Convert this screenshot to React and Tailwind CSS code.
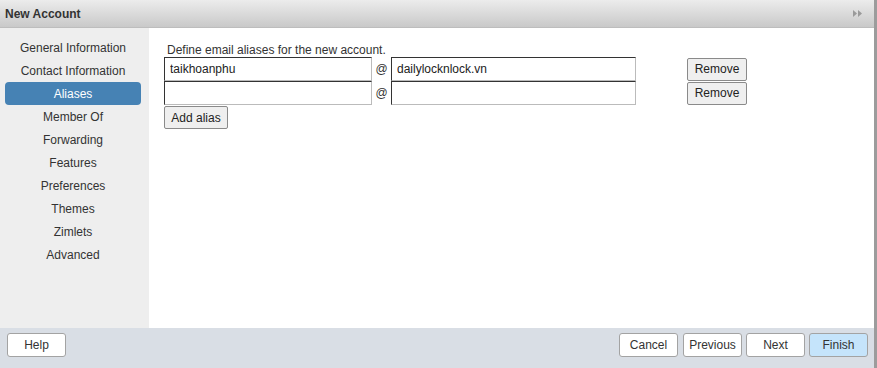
const navItems = [
  "General Information",
  "Contact Information",
  "Aliases",
  "Member Of",
  "Forwarding",
  "Features",
  "Preferences",
  "Themes",
  "Zimlets",
  "Advanced",
];

const aliases = [
  { name: "taikhoanphu", domain: "dailylocknlock.vn" },
  { name: "", domain: "" },
];

const FooterButton = ({ children, className = "" }) => (
  <button
    className={
      "h-[24px] w-[59px] rounded-[3px] border border-[#a3a3a3] text-[12px] text-[#333] " +
      className
    }
  >
    {children}
  </button>
);

const App = () => {
  return (
    <div
      className="flex h-[368px] w-[877px] overflow-hidden bg-white"
      style={{ fontFamily: '"Liberation Sans", Arial, sans-serif' }}
    >
      <div className="flex w-[874px] flex-col">
        {/* title bar */}
        <div className="flex h-[28px] items-center justify-between border-b border-[#bdbdbd] bg-gradient-to-b from-[#ececec] to-[#c9c9c9] pl-[5px] pr-[12px]">
          <span className="text-[12px] font-bold text-[#333]">New Account</span>
          <svg width="9" height="7" viewBox="0 0 9 7">
            <path d="M0 0 L4 3.5 L0 7 Z" fill="#9a9a9a" />
            <path d="M5 0 L9 3.5 L5 7 Z" fill="#9a9a9a" />
          </svg>
        </div>

        <div className="flex h-[300px]">
          {/* side nav */}
          <div className="flex w-[149px] flex-col bg-[#eeeeee] pt-[8px]">
            {navItems.map((item) => (
              <div
                key={item}
                className={
                  item === "Aliases"
                    ? "mx-[5px] flex h-[23px] w-[136px] items-center justify-center rounded-[4px] bg-[#4682b4] text-[12px] text-white"
                    : "flex h-[23px] w-[146px] items-center justify-center text-[12px] text-[#333]"
                }
              >
                {item}
              </div>
            ))}
          </div>

          {/* content */}
          <div className="flex-1 pl-[15px] pt-[15px] text-[12px] text-[#333]">
            <p className="pl-[3px] leading-[14px]">Define email aliases for the new account.</p>
            {aliases.map((a, i) => (
              <div key={i} className="flex h-[24px] items-center">
                <input
                  readOnly
                  value={a.name}
                  className="h-[24px] w-[208px] border border-t-[#333] border-l-[#333] border-b-[#bbb] border-r-[#bbb] bg-white px-[5px] text-[12px] text-[#222] outline-none"
                />
                <span className="w-[19px] text-center text-[12px]">@</span>
                <input
                  readOnly
                  value={a.domain}
                  className="h-[24px] w-[245px] border border-t-[#333] border-l-[#333] border-b-[#bbb] border-r-[#bbb] bg-white px-[5px] text-[12px] text-[#222] outline-none"
                />
                <button className="ml-[51px] h-[23px] w-[60px] rounded-[2px] border border-[#8a8a8a] bg-[#efefef] text-[12px] text-[#222]">
                  Remove
                </button>
              </div>
            ))}
            <button className="mt-[1px] h-[23px] w-[64px] rounded-[2px] border border-[#8a8a8a] bg-[#efefef] text-[12px] text-[#222]">
              Add alias
            </button>
          </div>
        </div>

        {/* footer */}
        <div className="flex flex-1 items-start justify-between bg-[#d9dee5] pl-[7px] pr-[6px] pt-[5px]">
          <FooterButton className="bg-white">Help</FooterButton>
          <div className="flex gap-[4px]">
            <FooterButton className="mr-[1px] bg-white">Cancel</FooterButton>
            <FooterButton className="w-[58px] bg-white">Previous</FooterButton>
            <FooterButton className="bg-white">Next</FooterButton>
            <FooterButton className="bg-[#c5e4fb]">Finish</FooterButton>
          </div>
        </div>
      </div>
      <div className="w-[3px] bg-[#9c9c9c]" />
    </div>
  );
};

export default App;
